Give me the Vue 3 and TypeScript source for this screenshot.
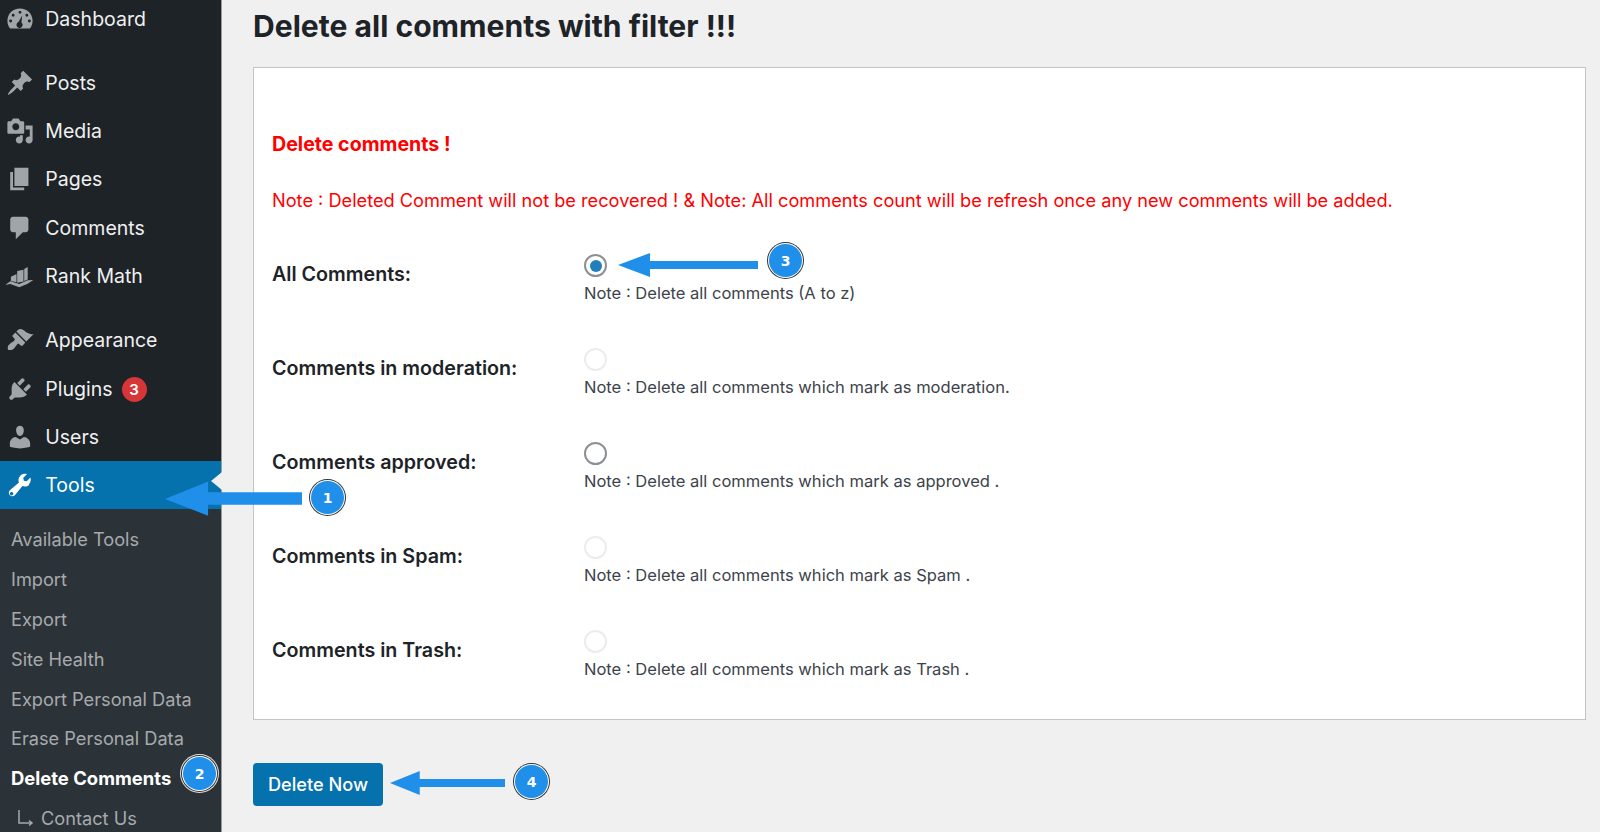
<script setup lang="ts">
interface MenuItem { label: string; icon: string; gapBefore?: boolean; badge?: string; active?: boolean }
const icons: Record<string, string> = {
  dash: 'M10 2.500C4.900 2.500 1 6.300 1 11.200c0 2.100.7 4.100 2 5.600h14c1.300-1.500 2-3.500 2-5.600 0-4.900-3.900-8.700-9-8.700zM10 4.200a1.050 1.050 0 1 1 0 2.100 1.050 1.050 0 0 1 0-2.100zM5.100 6.300a1.050 1.050 0 1 1 0 2.100 1.050 1.050 0 0 1 0-2.100zM14.900 6.300a1.050 1.050 0 1 1 0 2.100 1.050 1.050 0 0 1 0-2.100zM3.300 10.400a1.050 1.050 0 1 1 0 2.100 1.050 1.050 0 0 1 0-2.100zM16.700 10.400a1.050 1.050 0 1 1 0 2.100 1.050 1.050 0 0 1 0-2.100zM11.600 7.500l-.6 5a2.200 2.200 0 1 1-2.100-.3z',
  pin: 'M10.440 3.020l1.820-1.820 6.360 6.350-1.830 1.820c-1.050-.68-2.480-.57-3.410.36l-.75.75c-.92.93-1.040 2.350-.35 3.410l-1.830 1.820-2.410-2.410-2.800 2.790c-.42.42-3.380 2.710-3.800 2.290s1.860-3.390 2.280-3.810l2.790-2.790L4.100 9.360l1.830-1.820c1.050.69 2.480.57 3.400-.36l.75-.75c.93-.92 1.050-2.350.36-3.410z',
  media: 'M13 11V4c0-.55-.45-1-1-1h-1.670L9 1H5L3.670 3H2c-.55 0-1 .45-1 1v7c0 .55.45 1 1 1h10c.55 0 1-.45 1-1zM7 4.500c1.380 0 2.500 1.120 2.500 2.500S8.380 9.500 7 9.500 4.500 8.380 4.500 7 5.620 4.500 7 4.500zM14 6h5v10.500c0 1.380-1.120 2.500-2.500 2.500S14 17.880 14 16.500s1.120-2.500 2.500-2.500c.17 0 .34.02.5.05V9h-3V6zm-4 8.050V13h2v3.500c0 1.380-1.120 2.500-2.500 2.500S7 17.880 7 16.500 8.120 14 9.500 14c.17 0 .34.02.5.05z',
  pages: 'M6 15V2h10v13H6zm-1 1h8v2H3V5h2v11z',
  comment: 'M5 2h9c1.100 0 2 .9 2 2v7c0 1.100-.9 2-2 2h-2l-5 5v-5H5c-1.100 0-2-.9-2-2V4c0-1.100.9-2 2-2z',
  rank: 'M3.500 10.500L7.500 8.500V14.500L3.500 13.500zM8 6.500L12.500 5.500V14L8 14.800zM13 5L15.500 3.500V12.500L13 13.500zM-.5 16.500L3 13.800 9.500 15.800 15.500 13 19.500 12.800 15.500 15.500 9.500 18 3 15.800z',
  brush: 'M14.480 11.060L7.410 3.990l1.500-1.500c.5-.56 2.300-.47 3.510.32 1.210.8 1.430 1.280 2.910 2.100 1.180.64 2.450 1.260 4.450.85zm-.71.71L6.700 4.700 4.930 6.470c-.39.39-.39 1.020 0 1.410l1.060 1.060c.39.39.39 1.030 0 1.420-.6.6-1.430 1.110-2.210 1.690-.35.26-.7.53-1.010.84C1.430 13.710.96 15.120 1.410 17.030c1.900.46 3.320-.02 4.150-.85.32-.32.58-.66.84-1.020.58-.77 1.090-1.610 1.690-2.210.39-.39 1.020-.39 1.410 0l1.060 1.060c.39.39 1.020.39 1.410 0z',
  plug: 'M13.110 4.360L9.870 7.600 8 5.730l3.240-3.240c.35-.34 1.050-.2 1.560.32.52.51.66 1.210.31 1.550zm-8 1.770l.91-1.120 9.010 9.010-1.190.84c-.71.71-2.630 1.160-3.820 1.160H6.140L4.900 17.260c-.59.59-1.540.59-2.120 0-.59-.58-.59-1.530 0-2.120l1.240-1.240v-3.880c0-1.130.4-3.190 1.090-3.890zm7.260 3.970l3.240-3.240c.34-.35 1.040-.21 1.550.31.52.51.66 1.210.31 1.550l-3.240 3.250z',
  user: 'M10 9.250c-2.270 0-2.730-3.440-2.730-3.440C7 4.020 7.820 2 9.970 2c2.160 0 2.980 2.020 2.710 3.810 0 0-.41 3.440-2.680 3.440zm0 2.570L12.720 10c2.390 0 4.520 2.330 4.520 4.530v2.490s-3.650 1.130-7.240 1.130c-3.650 0-7.240-1.130-7.240-1.130v-2.490c0-2.250 1.940-4.480 4.150-4.480z',
  wrench: 'M16.680 9.770c-1.340 1.340-3.300 1.670-4.950.99l-5.410 6.520c-.99.99-2.590.99-3.580 0s-.99-2.590 0-3.570l6.520-5.420c-.68-1.650-.35-3.610.99-4.950 1.280-1.280 3.120-1.640 4.720-1.080l-2.620 2.620.35 2.120 2.120.35 2.620-2.620c.56 1.600.2 3.440-1.080 4.720zM4.860 15.410c-.47-.47-1.230-.47-1.700 0-.47.47-.47 1.230 0 1.700.47.47 1.230.47 1.700 0 .47-.47.47-1.230 0-1.700z',
}
const menu: MenuItem[] = [
  { label: 'Dashboard', icon: 'dash' },
  { label: 'Posts', icon: 'pin', gapBefore: true },
  { label: 'Media', icon: 'media' },
  { label: 'Pages', icon: 'pages' },
  { label: 'Comments', icon: 'comment' },
  { label: 'Rank Math', icon: 'rank' },
  { label: 'Appearance', icon: 'brush', gapBefore: true },
  { label: 'Plugins', icon: 'plug', badge: '3' },
  { label: 'Users', icon: 'user' },
  { label: 'Tools', icon: 'wrench', active: true },
]
const sub = ['Available Tools', 'Import', 'Export', 'Site Health', 'Export Personal Data', 'Erase Personal Data']
const rows = [
  { label: 'All Comments:', note: 'Note : Delete all comments (A to z)', state: 'on' },
  { label: 'Comments in moderation:', note: 'Note : Delete all comments which mark as moderation.', state: 'faint' },
  { label: 'Comments approved:', note: 'Note : Delete all comments which mark as approved .', state: 'off' },
  { label: 'Comments in Spam:', note: 'Note : Delete all comments which mark as Spam .', state: 'faint' },
  { label: 'Comments in Trash:', note: 'Note : Delete all comments which mark as Trash .', state: 'faint' },
]
</script>

<template>
  <div class="page">
    <aside class="side">
      <nav class="menu">
        <div v-for="m in menu" :key="m.label" class="item" :class="{ gap: m.gapBefore, active: m.active }">
          <svg class="ico" viewBox="0 0 20 20"><path fill-rule="evenodd" :d="icons[m.icon]" /></svg>
          <span>{{ m.label }}</span>
          <span v-if="m.badge" class="badge">{{ m.badge }}</span>
        </div>
      </nav>
      <div class="sub">
        <div v-for="s in sub" :key="s" class="sub-item">{{ s }}</div>
        <div class="sub-item current">Delete Comments</div>
        <div class="sub-item child">
          <svg class="elbow" viewBox="0 0 18 18"><path d="M2 1v13h12M12 11.500l3 2.500-3 2.500" /></svg>
          <span>Contact Us</span>
        </div>
      </div>
    </aside>

    <main class="main">
      <h1 class="title">Delete all comments with filter !!!</h1>
      <section class="card">
        <h2 class="warn">Delete comments !</h2>
        <p class="warn-note">Note : Deleted Comment will not be recovered ! &amp; Note: All comments count will be refresh once any new comments will be added.</p>
        <div v-for="r in rows" :key="r.label" class="row">
          <div class="row-label">{{ r.label }}</div>
          <div class="row-field">
            <span class="radio" :class="r.state"></span>
            <div class="note">{{ r.note }}</div>
          </div>
        </div>
      </section>
      <button class="btn" type="button">Delete Now</button>
    </main>

    <!-- annotations drawn over the capture -->
    <svg class="arrow a1" viewBox="0 0 140 40"><path d="M0 20L44 2v11h96v13H44v11z" /></svg>
    <svg class="arrow a3" viewBox="0 0 140 24"><path d="M0 12L32 0v8h108v8H32v8z" /></svg>
    <svg class="arrow a4" viewBox="0 0 116 24"><path d="M0 12L30 0v8h86v8H30v8z" /></svg>
    <span class="mark m1">1</span>
    <span class="mark m2">2</span>
    <span class="mark m3">3</span>
    <span class="mark m4">4</span>
    <span class="notch"></span>
  </div>
</template>

<style>
html, body { margin: 0; background: #f0f0f1; }
</style>

<style scoped>
.page {
  position: relative;
  display: flex;
  width: 1600px;
  height: 832px;
  overflow: hidden;
  background: #f0f0f1;
  font-family: Inter, "Liberation Sans", sans-serif;
  color: #1d2327;
}
.side {
  width: 222px;
  flex: none;
  background: #1d2327;
  border-right: 1px solid #9a9c9e;
  box-sizing: border-box;
}
.menu { margin-top: -5.500px; }
.item {
  display: flex;
  align-items: center;
  height: 48.300px;
  padding-left: 6px;
  color: #f0f0f1;
  font-size: 19.500px;
}
.item.gap { margin-top: 15.900px; }
.item.active { background: #0571ad; color: #fff; }
.ico {
  width: 28px;
  height: 28px;
  margin-right: 11.300px;
  fill: #a0a5aa;
  flex: none;
  overflow: visible;
}
.active .ico { fill: #fff; }
.badge {
  display: flex;
  align-items: center;
  justify-content: center;
  width: 25px;
  height: 25px;
  margin: 2px 0 0 9px;
  border-radius: 50%;
  background: #d63638;
  color: #fff;
  font-size: 15px;
  font-weight: 600;
}
.sub {
  background: #2c3338;
  height: 323px;
  padding-top: 10px;
  box-sizing: border-box;
}
.sub-item {
  display: flex;
  align-items: center;
  height: 39.860px;
  padding-left: 11px;
  color: #a7aaad;
  font-size: 18.200px;
  white-space: nowrap;
}
.sub-item.current { color: #fff; font-weight: 700; font-size: 18.450px; }
.sub-item.child { padding-left: 17px; }
.elbow { width: 18px; height: 18px; margin-right: 6px; fill: none; stroke: #a7aaad; stroke-width: 1.500; }
.main {
  flex: 1;
  padding: 0 14px 0 31px;
  min-width: 0;
}
.title {
  margin: 6px 0 21px;
  font-size: 30.100px;
  line-height: 40px;
  font-weight: 700;
  white-space: nowrap;
}
.card {
  box-sizing: border-box;
  height: 653px;
  padding: 64px 18px 0;
  background: #fff;
  border: 1px solid #c3c4c7;
}
.warn {
  margin: 0;
  color: #f00;
  font-size: 19.600px;
  line-height: 24px;
  font-weight: 700;
}
.warn-note {
  margin: 32px 0 32px;
  color: #f00;
  font-size: 18.200px;
  line-height: 24px;
  white-space: nowrap;
}
.row {
  display: flex;
  height: 94px;
}
.row-label {
  width: 312px;
  flex: none;
  padding-top: 17.500px;
  font-size: 19.700px;
  line-height: 24px;
  font-weight: 600;
  box-sizing: border-box;
}
.row-field { padding-top: 10px; }
.radio {
  display: block;
  box-sizing: border-box;
  width: 23px;
  height: 23px;
  border-radius: 50%;
  border: 2px solid #8c8f94;
  background: #fff;
}
.radio.faint { border-color: #ececed; }
.radio.on { position: relative; }
.radio.on::after {
  content: "";
  position: absolute;
  inset: 3.500px;
  border-radius: 50%;
  background: #2180bb;
}
.note {
  margin-top: 4px;
  font-size: 16.550px;
  line-height: 24px;
  color: #3c434a;
  white-space: nowrap;
}
.btn {
  display: block;
  width: 130px;
  height: 43px;
  margin-top: 43px;
  padding: 0 0 2px;
  border: 0;
  border-radius: 4px;
  background: #0571ad;
  color: #fff;
  font: 500 18.200px Inter, "Liberation Sans", sans-serif;
}
.arrow { position: absolute; fill: #1f8fea; }
.a1 { left: 165px; top: 479px; width: 137px; height: 40px; }
.a3 { left: 618px; top: 253px; width: 140px; height: 24px; }
.a4 { left: 390px; top: 771px; width: 115px; height: 24px; }
.mark {
  position: absolute;
  display: flex;
  align-items: center;
  justify-content: center;
  box-sizing: border-box;
  width: 33px;
  height: 33px;
  border-radius: 50%;
  background: #1f8fea;
  box-shadow: 0 0 0 1px #fff, 0 0 0 2px #333;
  color: #fff;
  font: 700 14px "DejaVu Sans", sans-serif;
}
.m1 { left: 311px; top: 481px; }
.m2 { left: 183px; top: 757px; box-shadow: 0 0 0 1px #fff, 0 0 0 2px #333, 0 0 0 3px #ddd; }
.m3 { left: 769px; top: 244px; }
.m4 { left: 515px; top: 765px; }
.notch {
  position: absolute;
  left: 211px;
  top: 472px;
  width: 0;
  height: 0;
  border-top: 9px solid transparent;
  border-bottom: 9px solid transparent;
  border-right: 11px solid #f0f0f1;
}
</style>
